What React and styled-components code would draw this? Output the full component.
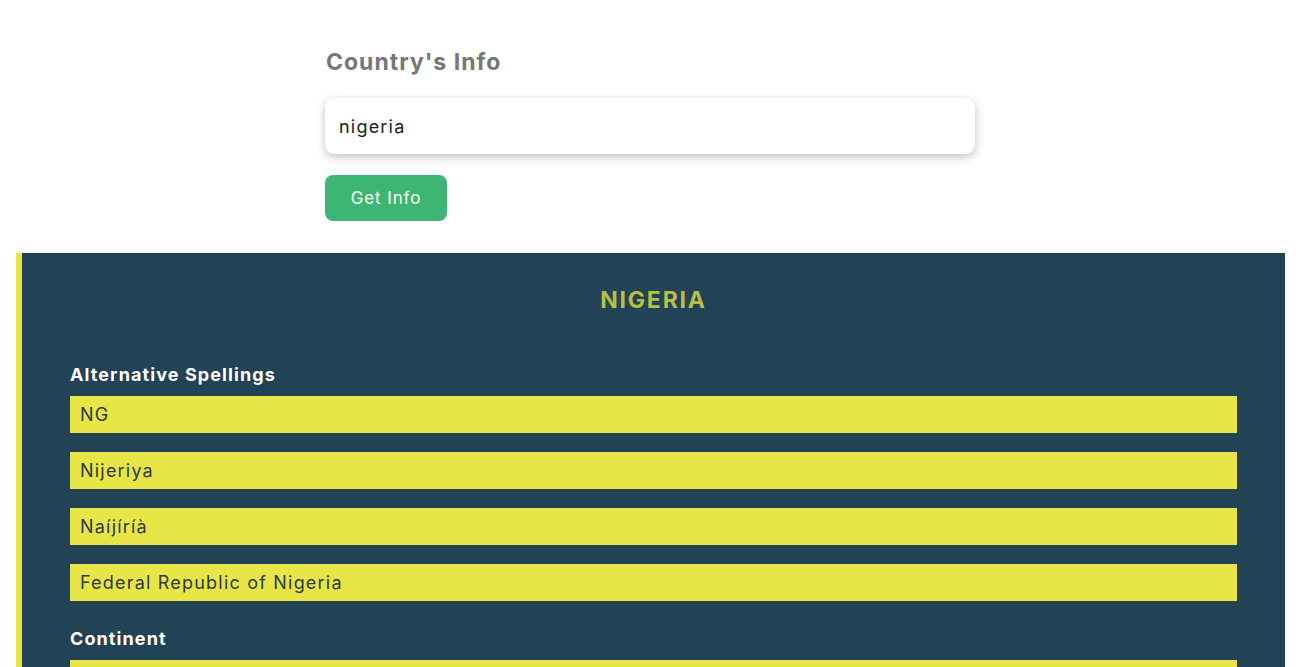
import React, { useState } from 'react';
import styled, { createGlobalStyle } from 'styled-components';

const GlobalStyle = createGlobalStyle`
  html, body {
    margin: 0;
    padding: 0;
    overflow: hidden;
    background: #fff;
    font-family: Inter, "Open Sans", sans-serif;
  }
  * { box-sizing: border-box; }
`;

const Page = styled.div`
  padding: 8px 16px 0;
`;

const SearchArea = styled.div`
  width: 651px;
  margin: 0 auto;
  padding-top: 40px;
  display: flex;
  flex-direction: column;
  align-items: flex-start;
`;

const Title = styled.h2`
  margin: 0 0 22px 1px;
  font-size: 23px;
  font-weight: 700;
  line-height: 28px;
  letter-spacing: 1px;
  color: #777;
`;

const SearchInput = styled.input`
  width: 650px;
  height: 56px;
  padding: 0 14px;
  border: none;
  border-radius: 9px;
  box-shadow: 0 3px 10px rgba(0, 0, 0, 0.25);
  font-family: inherit;
  font-size: 18px;
  letter-spacing: 1.2px;
  color: #222;
  outline: none;
`;

const InfoButton = styled.button`
  margin-top: 21px;
  width: 122px;
  height: 46px;
  border: none;
  border-radius: 8px;
  background: #3cb672;
  color: #fff;
  font-family: inherit;
  font-size: 17px;
  letter-spacing: 0.9px;
  cursor: pointer;
`;

const Panel = styled.section`
  margin-top: 32px;
  background: #224255;
  border-left: 6px solid #e8e547;
  padding: 32px 48px 40px;
`;

const CountryName = styled.h1`
  margin: 0 0 49px;
  text-align: center;
  font-size: 23px;
  font-weight: 700;
  line-height: 30px;
  letter-spacing: 1.8px;
  color: #b8bf44;
  text-transform: uppercase;
`;

const Group = styled.div`
  margin-bottom: 27px;
`;

const GroupLabel = styled.h3`
  margin: 0 0 10px;
  font-size: 18px;
  font-weight: 700;
  line-height: 22px;
  letter-spacing: 1.1px;
  color: #fff;
`;

const List = styled.div`
  display: flex;
  flex-direction: column;
  gap: 19px;
`;

const Item = styled.div`
  height: 37px;
  display: flex;
  align-items: center;
  padding: 0 10px;
  background: #e8e547;
  color: #2c3b33;
  font-size: 18px;
  letter-spacing: 1.2px;
`;

const country = {
  name: 'Nigeria',
  altSpellings: ['NG', 'Nijeriya', 'Naíjíríà', 'Federal Republic of Nigeria'],
  continent: ['Africa'],
};

const App = () => {
  const [query, setQuery] = useState('nigeria');

  return (
    <>
      <GlobalStyle />
      <Page>
        <SearchArea>
          <Title>Country's Info</Title>
          <SearchInput value={query} onChange={(e) => setQuery(e.target.value)} />
          <InfoButton>Get Info</InfoButton>
        </SearchArea>
        <Panel>
          <CountryName>{country.name}</CountryName>
          <Group>
            <GroupLabel>Alternative Spellings</GroupLabel>
            <List>
              {country.altSpellings.map((s) => (
                <Item key={s}>{s}</Item>
              ))}
            </List>
          </Group>
          <Group>
            <GroupLabel>Continent</GroupLabel>
            <List>
              {country.continent.map((s) => (
                <Item key={s}>{s}</Item>
              ))}
            </List>
          </Group>
        </Panel>
      </Page>
    </>
  );
};

export default App;
